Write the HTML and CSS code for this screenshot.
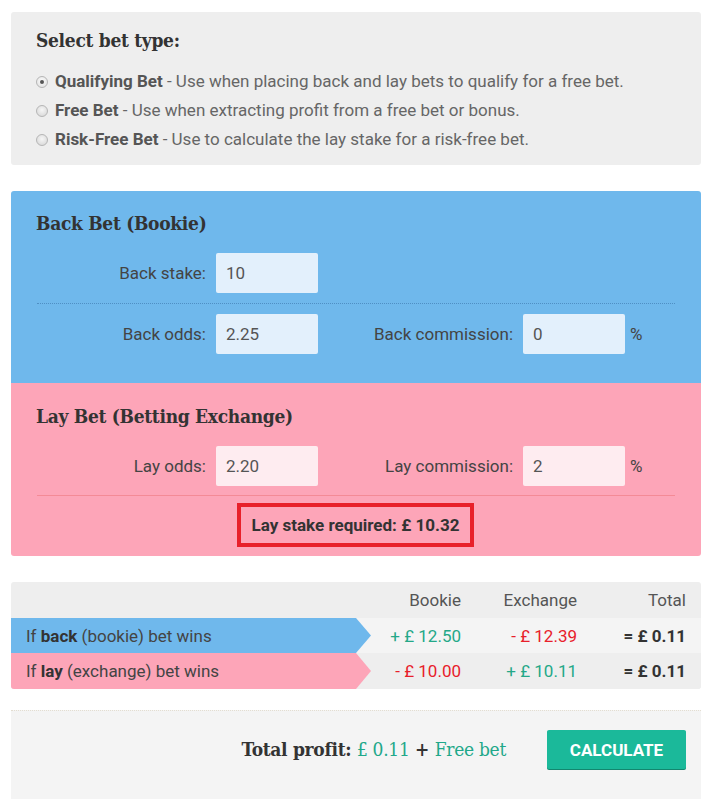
FILE: index.html
```html
<!DOCTYPE html>
<html lang="en">
<head>
<meta charset="utf-8">
<title>Matched Betting Calculator</title>
<link rel="stylesheet" href="styles.css">
</head>
<body>
<div class="calc">
  <section class="bet-type">
    <h2 class="slab-title">Select bet type:</h2>
    <ul class="options">
      <li class="option"><span class="radio checked"></span><span><b>Qualifying Bet</b> - Use when placing back and lay bets to qualify for a free bet.</span></li>
      <li class="option"><span class="radio"></span><span><b>Free Bet</b> - Use when extracting profit from a free bet or bonus.</span></li>
      <li class="option"><span class="radio"></span><span><b>Risk-Free Bet</b> - Use to calculate the lay stake for a risk-free bet.</span></li>
    </ul>
  </section>

  <section class="bets">
    <div class="panel back">
      <h2 class="slab-title">Back Bet (Bookie)</h2>
      <div class="row divided">
        <label class="lbl l1">Back stake:</label>
        <div class="field">10</div>
      </div>
      <div class="row">
        <label class="lbl l1">Back odds:</label>
        <div class="field">2.25</div>
        <label class="lbl l2">Back commission:</label>
        <div class="field">0</div>
        <span class="pct">%</span>
      </div>
    </div>
    <div class="panel lay">
      <h2 class="slab-title">Lay Bet (Betting Exchange)</h2>
      <div class="row divided">
        <label class="lbl l1">Lay odds:</label>
        <div class="field">2.20</div>
        <label class="lbl l2">Lay commission:</label>
        <div class="field">2</div>
        <span class="pct">%</span>
      </div>
      <div class="stake-wrap">
        <div class="stake">Lay stake required: £ 10.32</div>
      </div>
    </div>
  </section>

  <section class="results">
    <div class="res-row head">
      <div class="cell-label"></div>
      <div class="num">Bookie</div>
      <div class="num">Exchange</div>
      <div class="num tot">Total</div>
    </div>
    <div class="res-row r1">
      <div class="cell-label arrow blue"><span>If <b>back</b> (bookie) bet wins</span></div>
      <div class="num pos">+ £ 12.50</div>
      <div class="num neg">- £ 12.39</div>
      <div class="num tot strong">= £ 0.11</div>
    </div>
    <div class="res-row r2">
      <div class="cell-label arrow pink"><span>If <b>lay</b> (exchange) bet wins</span></div>
      <div class="num neg">- £ 10.00</div>
      <div class="num pos">+ £ 10.11</div>
      <div class="num tot strong">= £ 0.11</div>
    </div>
  </section>

  <section class="footer">
    <div class="profit">Total profit: <span class="g">£ 0.11</span> + <span class="g">Free bet</span></div>
    <button class="btn">CALCULATE</button>
  </section>
</div>
</body>
</html>
```
FILE: styles.css
```css
* { box-sizing: border-box; }
html, body { margin: 0; padding: 0; background: #fff; }
body {
  font-family: Roboto, "Noto Sans", "Liberation Sans", sans-serif;
  color: #444;
  font-size: 17px;
}
.calc {
  width: 690px;
  margin: 12px 0 0 11px;
}
.slab-title {
  font-family: "DejaVu Serif", "Liberation Serif", serif;
  font-stretch: condensed;
  font-weight: bold;
  font-size: 19px;
  line-height: 24px;
  color: #333;
  margin: 0;
  letter-spacing: -0.3px;
}
.bet-type {
  background: #eee;
  border-radius: 3px;
  padding: 16px 25px 11px 25px;
  height: 153px;
}
.options { list-style: none; margin: 15px 0 0 0; padding: 0; }
.option {
  height: 29px;
  line-height: 29px;
  display: flex;
  align-items: center;
  color: #666;
  white-space: pre;
}
.option b { color: #555; font-weight: 700; }
.radio {
  width: 12px; height: 12px;
  border-radius: 50%;
  border: 1px solid #b5b5b5;
  background: radial-gradient(circle at 50% 40%, #f6f6f6, #d4d4d4);
  margin: 0 7px 0 0;
  position: relative;
  flex: none;
}
.radio.checked { background: radial-gradient(circle at 50% 40%, #fbfbfb, #dedede); }
.radio.checked::after {
  content: "";
  position: absolute;
  left: 3px; top: 3px;
  width: 4px; height: 4px;
  border-radius: 50%;
  background: #555;
}

.bets {
  margin-top: 26px;
  border-radius: 3px;
  overflow: hidden;
}
.panel { padding: 0 26px 0 26px; }
.panel .slab-title { margin-left: -1px; }
.back { background: #6fb8ec; padding-top: 20px; padding-bottom: 29px; }
.lay { background: #fda5b8; padding-top: 21px; padding-bottom: 9px; }
.back .slab-title, .lay .slab-title { margin-bottom: 18px; }
.row {
  display: flex;
  align-items: center;
}
.row.divided {
  padding-bottom: 10px;
  margin-bottom: 10px;
}
.back .row.divided { border-bottom: 1px dotted #4f8fc4; }
.lay .row.divided { border-bottom: 1px solid #f48a96; padding-bottom: 9px; margin-bottom: 7px; }
.lbl {
  text-align: right;
  color: #444;
  padding-right: 10px;
}
.l1 { width: 179px; }
.l2 { width: 205px; }
.field {
  width: 102px;
  height: 40px;
  line-height: 40px;
  padding-left: 10px;
  border-radius: 2px;
  color: #555;
}
.back .field { background: #e3f0fc; }
.lay .field { background: #feecf0; }
.pct { margin-left: 5px; color: #444; }
.stake-wrap { display: flex; justify-content: center; margin-left: -1px; }
.stake {
  border: 4px solid #e8202a;
  height: 44px;
  line-height: 36px;
  padding: 0 11px;
  font-weight: bold;
  color: #333;
}

.results {
  margin-top: 26px;
  background: #eee;
  border-radius: 3px;
  overflow: hidden;
}
.res-row {
  display: grid;
  grid-template-columns: 345px 105px 116px 109px;
  align-items: center;
}
.res-row.head { height: 36px; color: #555; }
.res-row.r1 { height: 35px; background: #f4f4f4; }
.res-row.r2 { height: 36px; background: #eee; }
.num { text-align: right; }
.cell-label { height: 100%; }
.arrow {
  width: 360px;
  padding-left: 15px;
  display: flex;
  align-items: center;
  color: #444;
  clip-path: polygon(0 0, 345px 0, 360px 50%, 345px 100%, 0 100%);
}
.arrow b { color: #333; }
.arrow.blue { background: #6fb8ec; }
.arrow.pink { background: #fda5b8; }
.pos { color: #24a888; }
.neg { color: #e8202a; }
.strong { font-weight: bold; color: #333; }

.footer {
  margin-top: 21px;
  background: #f4f4f4;
  border-top: 1px dotted #e3ddd0;
  height: 89px;
  display: flex;
  justify-content: flex-end;
  align-items: flex-start;
  padding: 19px 15px 0 0;
}
.profit {
  font-family: "DejaVu Serif", "Liberation Serif", serif;
  font-stretch: condensed;
  font-weight: bold;
  font-size: 19px;
  letter-spacing: -0.3px;
  color: #333;
  line-height: 39px;
  margin-right: 41px;
}
.profit .g { color: #1fa88a; font-weight: normal; }
.btn {
  width: 139px;
  height: 39px;
  border: none;
  border-radius: 2px;
  background: #1bb99a;
  color: #fff;
  font-family: Roboto, "Liberation Sans", sans-serif;
  font-weight: bold;
  font-size: 17px;
  padding: 0;
  box-shadow: 0 1px 0 #12876f;
}
```
